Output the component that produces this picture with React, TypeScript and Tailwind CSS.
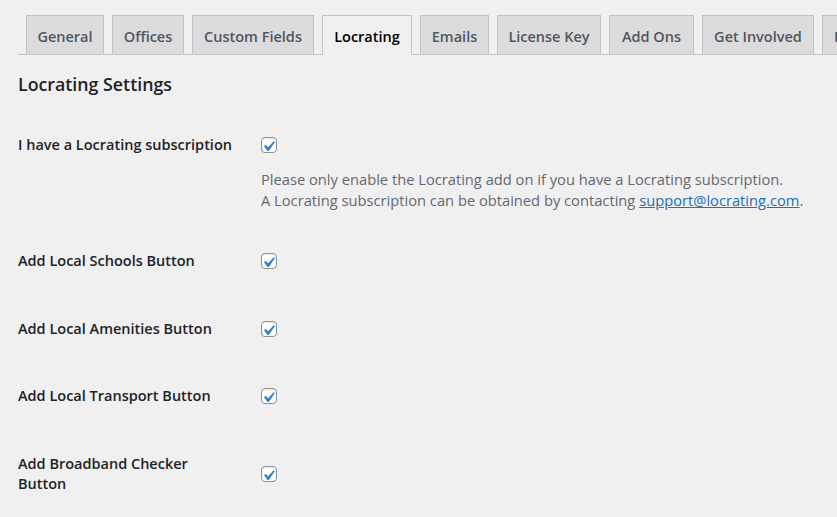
import React from "react";

const tabs = [
  { label: "General", w: "w-[78px] justify-center" },
  { label: "Offices", w: "w-[72px] justify-center" },
  { label: "Custom Fields", w: "w-[122px] justify-center" },
  { label: "Locrating", w: "w-[90px] justify-center", active: true },
  { label: "Emails", w: "w-[69px] justify-center" },
  { label: "License Key", w: "w-[104px] justify-center" },
  { label: "Add Ons", w: "w-[85px] justify-center" },
  { label: "Get Involved", w: "w-[112px] justify-center" },
  { label: "Help", w: "px-[11px]" },
];

const Checkbox = () => (
  <span className="relative inline-block h-4 w-4 shrink-0 rounded-[4px] border border-[#8c8f94] bg-white shadow-[inset_0_1px_2px_rgba(0,0,0,0.1)]">
    <svg viewBox="0 0 20 20" className="absolute -left-[4px] -top-[2px] h-[21px] w-[21px]">
      <path d="M14.83 4.89l1.34.94-5.81 8.38H9.02L5.78 9.67l1.34-1.25 2.57 2.4z" fill="#3582c4" />
    </svg>
  </span>
);

const Row = ({ label }: { label: React.ReactNode }) => (
  <div className="pt-[19px] pb-[28.5px]">
    <div className="flex items-center">
      <div className="w-[243px] shrink-0 pr-[20px] text-[14.5px] font-semibold leading-[20px] text-[#1d2327]">
        {label}
      </div>
      <Checkbox />
    </div>
  </div>
);

export default function App() {
  return (
    <div className="min-h-screen w-full overflow-hidden bg-[#f0f0f1] font-['Open_Sans',sans-serif]">
      <div className="ml-[18px] flex items-end gap-2 border-b border-[#c3c4c7] pl-2 pt-[15px] whitespace-nowrap">
        {tabs.map((t) =>
          t.active ? (
            <div
              key={t.label}
              className={`${t.w} -mb-px flex h-[40px] shrink-0 items-center border border-[#c3c4c7] border-b-[#f0f0f1] bg-[#f0f0f1] pt-[3px] text-[14.5px] font-semibold text-black`}
            >
              {t.label}
            </div>
          ) : (
            <div
              key={t.label}
              className={`${t.w} flex h-[39px] shrink-0 items-center border border-b-0 border-[#c3c4c7] bg-[#dcdcde] pt-[3px] text-[14.5px] font-semibold text-[#50575e]`}
            >
              {t.label}
            </div>
          )
        )}
      </div>

      <div className="px-[18px]">
        <h2 className="mt-[18px] text-[17.8px] font-semibold leading-[22px] text-[#1d2327]">Locrating Settings</h2>

        <div className="mt-[21px]">
          <div className="pt-[19px] pb-[21px]">
            <div className="flex items-center">
              <div className="w-[243px] shrink-0 pr-[20px] text-[14.5px] font-semibold leading-[20px] text-[#1d2327] whitespace-nowrap">
                I have a Locrating subscription
              </div>
              <Checkbox />
            </div>
            <p className="ml-[243px] mt-[14px] text-[14.7px] leading-[21px] text-[#646970]">
              Please only enable the Locrating add on if you have a Locrating subscription.
              <br />
              A Locrating subscription can be obtained by contacting{" "}
              <a href="#" className="text-[#2271b1] underline">
                support@locrating.com
              </a>
              .
            </p>
          </div>
          <Row label="Add Local Schools Button" />
          <Row label="Add Local Amenities Button" />
          <Row label="Add Local Transport Button" />
          <Row label={<span className="block w-[200px]">Add Broadband Checker Button</span>} />
        </div>
      </div>
    </div>
  );
}
